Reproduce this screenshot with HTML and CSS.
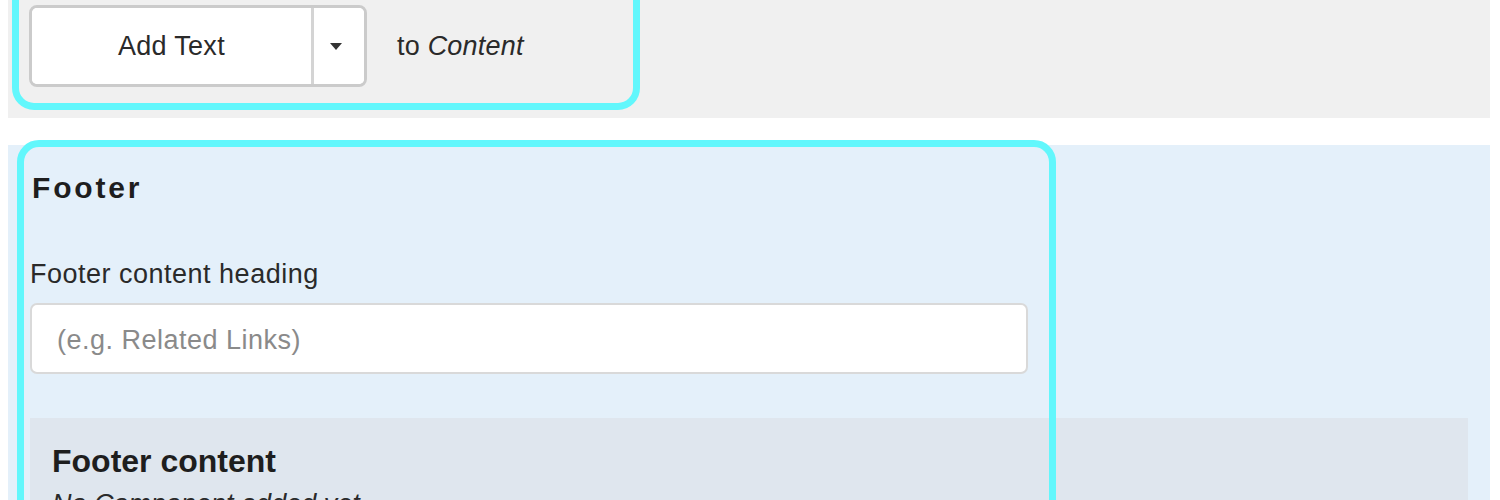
FILE: index.html
```html
<!DOCTYPE html>
<html lang="en">
<head>
<meta charset="utf-8">
<title>Footer editor</title>
<link rel="stylesheet" href="styles.css">
</head>
<body>
<div class="page">
  <section class="add-bar">
    <div class="add-row">
      <div class="split-btn">
        <button class="split-main" type="button">Add Text</button>
        <button class="split-caret" type="button" aria-label="More"><span class="caret"></span></button>
      </div>
      <span class="target">to <em>Content</em></span>
    </div>
    <div class="highlight highlight-top"></div>
  </section>

  <section class="footer-panel">
    <h3 class="panel-title">Footer</h3>
    <label class="field-label" for="fh">Footer content heading</label>
    <input class="field-input" id="fh" type="text" placeholder="(e.g. Related Links)">
    <div class="content-box">
      <h4 class="content-title">Footer content</h4>
      <p class="content-empty">No Component added yet</p>
    </div>
    <div class="highlight highlight-footer"></div>
  </section>
</div>
</body>
</html>
```

FILE: styles.css
```css
html, body {
  margin: 0;
  padding: 0;
  background: #ffffff;
  overflow: hidden;
}

body {
  font-family: "Liberation Sans", Arial, sans-serif;
  color: #222222;
}

.page {
  width: 1482px;
  margin-left: 8px;
}

.add-bar {
  position: relative;
  height: 118px;
  background: #f0f0f0;
  box-sizing: border-box;
  padding: 5px 0 0 21px;
}

.add-row {
  display: flex;
  align-items: center;
  gap: 30px;
}

.split-btn {
  display: flex;
  height: 82px;
  border: 3px solid #cbcbcb;
  border-radius: 8px;
  background: #ffffff;
  box-sizing: border-box;
  overflow: hidden;
}

.split-main,
.split-caret {
  border: none;
  background: #ffffff;
  font-family: "Liberation Sans", Arial, sans-serif;
  color: #2a2a2a;
  padding: 0;
  margin: 0;
}

.split-main {
  width: 282px;
  font-size: 27px;
  letter-spacing: 0.3px;
  border-right: 3px solid #d4d4d4;
}

.split-caret {
  width: 50px;
  display: flex;
  align-items: center;
  justify-content: center;
}

.caret {
  width: 0;
  height: 0;
  border-left: 6px solid transparent;
  border-right: 6px solid transparent;
  border-top: 7px solid #333333;
  margin-left: -6px;
}

.target {
  font-size: 27px;
  color: #2a2a2a;
  letter-spacing: 0.2px;
}

.target em {
  font-style: italic;
}

.highlight {
  position: absolute;
  border: 7px solid #62f7fc;
  border-radius: 22px;
  box-sizing: border-box;
  pointer-events: none;
}

.highlight-top {
  left: 4px;
  top: -30px;
  width: 628px;
  height: 140px;
}

.footer-panel {
  position: relative;
  margin-top: 27px;
  background: #e4f0fa;
  padding: 26px 22px 40px 22px;
  height: 400px;
  box-sizing: border-box;
}

.panel-title {
  margin: 0;
  font-size: 30px;
  line-height: 34px;
  font-weight: bold;
  letter-spacing: 2.8px;
  color: #1e1e1e;
  padding-left: 2px;
}

.field-label {
  display: block;
  margin-top: 53px;
  font-size: 27px;
  line-height: 32px;
  letter-spacing: 0.5px;
  color: #2a2a2a;
}

.field-input {
  display: block;
  margin-top: 13px;
  width: 998px;
  height: 71px;
  box-sizing: border-box;
  border: 2px solid #d9d9d9;
  border-radius: 7px;
  background: #ffffff;
  padding: 4px 25px 0 25px;
  font-family: "Liberation Sans", Arial, sans-serif;
  font-size: 27px;
  letter-spacing: 0.5px;
  color: #333333;
  outline: none;
}

.field-input::placeholder {
  color: #8a8a8a;
}

.content-box {
  margin-top: 44px;
  background: #dfe6ee;
  padding: 25px 22px 20px 22px;
}

.content-title {
  margin: 0;
  font-size: 32px;
  line-height: 37px;
  font-weight: bold;
  color: #1e1e1e;
}

.content-empty {
  margin: 8px 0 0 0;
  font-size: 27px;
  line-height: 32px;
  font-style: italic;
  color: #2a2a2a;
}

.highlight-footer {
  left: 9px;
  top: -5px;
  width: 1039px;
  height: 600px;
}
```
